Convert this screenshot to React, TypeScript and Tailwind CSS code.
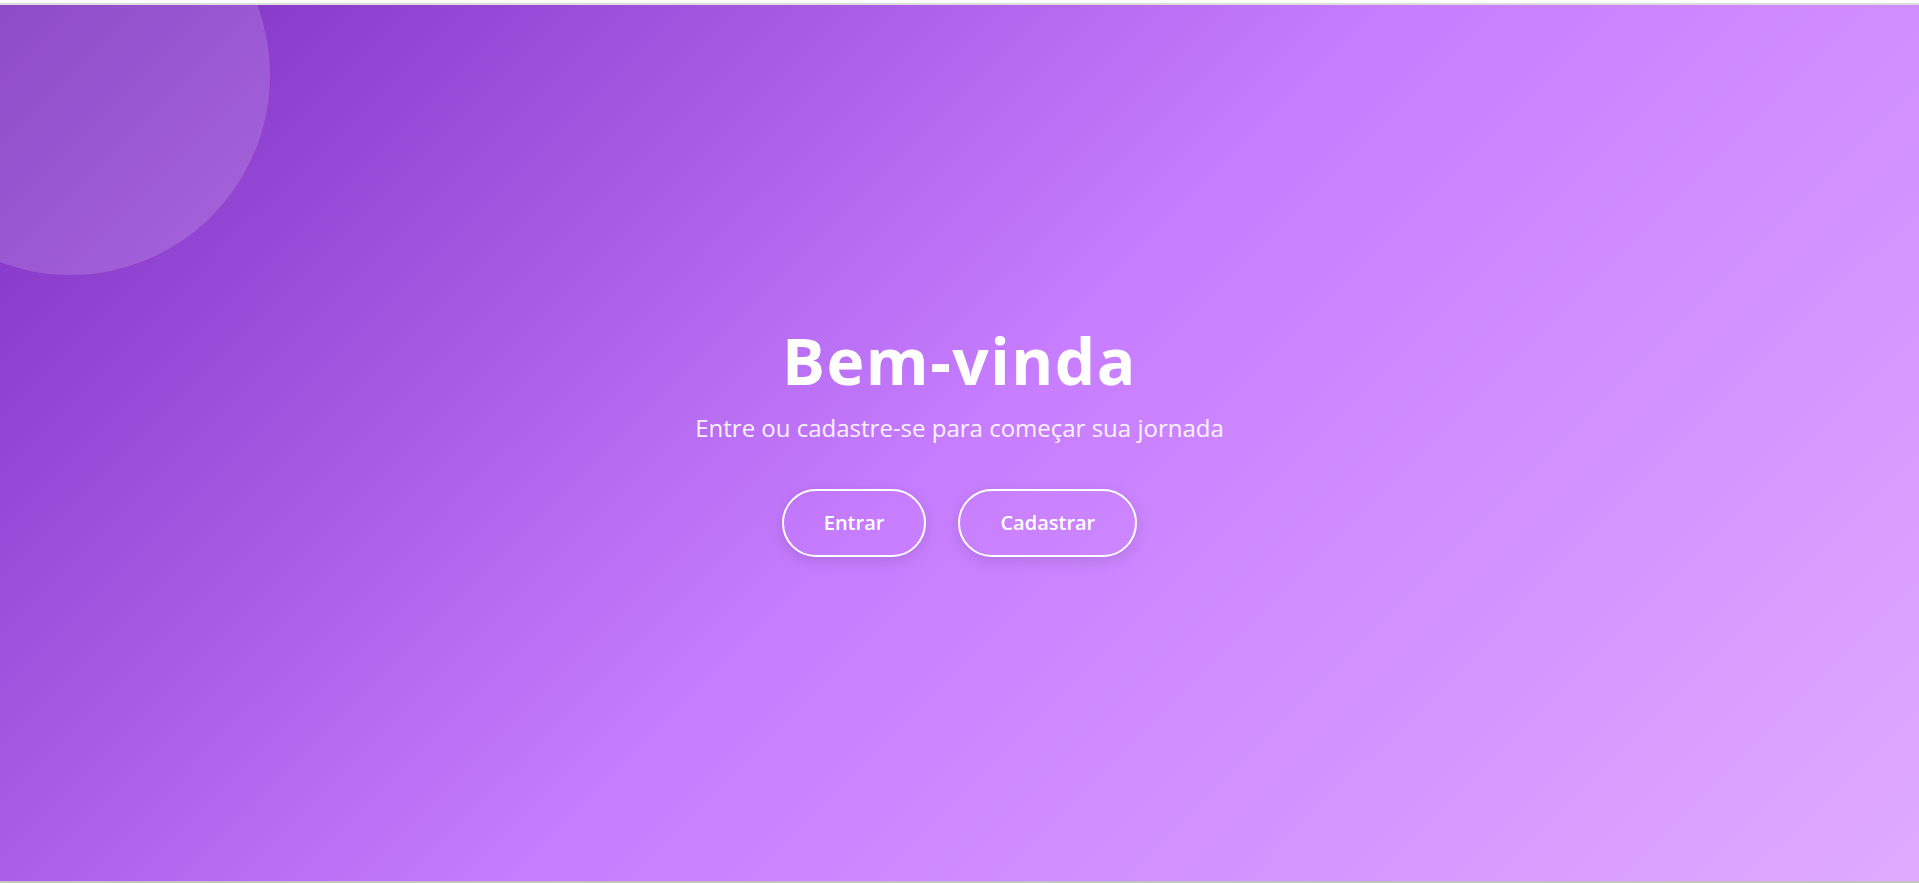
const FONT = "font-['Open_Sans','Noto_Sans',sans-serif]";

export default function App() {
  return (
    <div className={`w-full h-[883px] overflow-hidden bg-white ${FONT}`}>
      <div className="h-[3px] bg-white" />
      <div className="h-[2px] bg-[#dcdcdc]" />
      <section className="relative h-[876px] overflow-hidden bg-[linear-gradient(135deg,#7b2cbf_0%,#c77dff_50%,#e0aaff_100%)] flex flex-col items-center justify-center">
        {/* soft bubble in the corner */}
        <div className="absolute left-[-130px] top-[-130px] w-[400px] h-[400px] rounded-full bg-white/15" />

        <div className="relative flex flex-col items-center text-white">
          <h1 className="text-[64px] font-bold leading-none tracking-[1.5px]">Bem-vinda</h1>
          <p className="mt-[23px] text-[24px] leading-none text-white/90">
            Entre ou cadastre-se para começar sua jornada
          </p>
          <div className="mt-[49px] flex gap-8">
            {["Entrar", "Cadastrar"].map((label) => (
              <button
                key={label}
                className="rounded-full border-2 border-white bg-transparent px-10 py-[19px] text-[20px] font-semibold leading-[26px] text-white shadow-[0_4px_15px_rgba(0,0,0,0.12)]"
              >
                {label}
              </button>
            ))}
          </div>
        </div>
      </section>
      <div className="h-[2px] bg-[#c4c4c4]" />
    </div>
  );
}
